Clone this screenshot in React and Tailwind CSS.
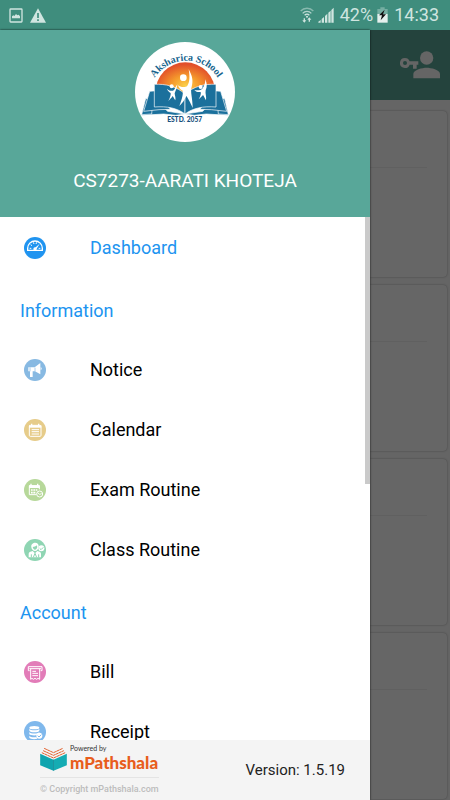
import React from 'react';

const iconClass = 'h-[22px] w-[22px] shrink-0';

const DashboardIcon = () => (
  <svg viewBox="0 0 66 66" className={iconClass} aria-hidden="true">
    <circle cx="33" cy="33" r="33" fill="#2094f0" />
    <path d="M11 40V34a22 22 0 0 1 44 0v6z" fill="none" stroke="#fff" strokeWidth="4" />
    <path d="M17 34h5M20 23l4 3M28 16l2 5M38 16l-2 5M49 34h-5" stroke="#fff" strokeWidth="3" />
    <path d="M30 35L47 20L37 37z" fill="#fff" />
    <circle cx="33" cy="36" r="5" fill="#fff" />
  </svg>
);

const NoticeIcon = () => (
  <svg viewBox="0 0 66 66" className={iconClass} aria-hidden="true">
    <circle cx="33" cy="33" r="33" fill="#87b9e2" />
    <path d="M13 25h19l17-13v34L33 37h-7v17h-8V37h-5z" fill="#fff" />
    <path d="M18 25v12M33 26v11" stroke="#87b9e2" strokeWidth="2" />
    <path d="M50 24c4 2 4 8 0 10" fill="#fff" />
  </svg>
);

const CalendarIcon = () => (
  <svg viewBox="0 0 66 66" className={iconClass} aria-hidden="true">
    <circle cx="33" cy="33" r="33" fill="#e6cc8a" />
    <rect x="16" y="19" width="35" height="33" rx="3" fill="none" stroke="#fff" strokeWidth="3" />
    <path d="M15 19h37v7H15z" fill="#fff" />
    <path d="M23 14v8M44 14v8" stroke="#fff" strokeWidth="4" />
    <path d="M23 32h22M23 38h22M23 45h22" stroke="#fff" strokeWidth="3" />
  </svg>
);

const ExamIcon = () => (
  <svg viewBox="0 0 66 66" className={iconClass} aria-hidden="true">
    <circle cx="33" cy="33" r="33" fill="#b7d89a" />
    <path d="M37 47H16V20h30v11" fill="none" stroke="#fff" strokeWidth="3" />
    <path d="M15 19h32v8H15z" fill="#fff" />
    <path d="M21 14v8M41 14v8" stroke="#fff" strokeWidth="4" />
    <path d="M21 33h19M21 41h15" stroke="#fff" strokeWidth="5" strokeDasharray="5 2" />
    <circle cx="47" cy="45" r="9" fill="#b7d89a" stroke="#fff" strokeWidth="3" />
    <path d="M41 41l6 5 6-2" fill="none" stroke="#fff" strokeWidth="3" />
  </svg>
);

const ClassIcon = () => (
  <svg viewBox="0 0 66 66" className={iconClass} aria-hidden="true">
    <circle cx="33" cy="33" r="33" fill="#8fd5b3" />
    <path d="M22 25c-3-17 24-19 22-2-1 7-5 13-11 13s-10-5-11-11z" fill="#fff" />
    <path d="M26 24c5 0 9-2 12-5l2 5c-1 5-4 8-7 8s-6-3-7-8z" fill="#8fd5b3" />
    <path d="M14 55V44c0-4 5-6 12-8l7 7 7-7c7 2 11 4 11 8v11z" fill="#fff" />
    <path d="M33 43l-5 12M33 43l5 12M22 46v9M44 46v9" stroke="#8fd5b3" strokeWidth="3" />
    <circle cx="52" cy="28" r="9" fill="#fff" />
    <path d="M47 28l4 4 7-7" fill="none" stroke="#8fd5b3" strokeWidth="3" />
  </svg>
);

const BillIcon = () => (
  <svg viewBox="0 0 66 66" className={iconClass} aria-hidden="true">
    <circle cx="33" cy="33" r="33" fill="#e27cb8" />
    <path d="M17 29h-4V17h41v12h-4" fill="none" stroke="#fff" strokeWidth="3" />
    <path d="M16 23h35" stroke="#fff" strokeWidth="3" />
    <path d="M20 23v32l4-3 4 3 5-3 5 3 4-3 5 3V23" fill="none" stroke="#fff" strokeWidth="3" />
    <path d="M25 31h11M25 37h17M25 44h17" stroke="#fff" strokeWidth="3" />
  </svg>
);

const ReceiptIcon = () => (
  <svg viewBox="0 0 66 66" className={iconClass} aria-hidden="true">
    <circle cx="33" cy="33" r="33" fill="#7fb8ec" />
    <ellipse cx="31" cy="20" rx="15" ry="5" fill="#fff" />
    <path d="M16 23c3 6 27 6 30 0v6c-3 6-27 6-30 0z" fill="#fff" />
    <path d="M16 33c3 6 25 6 30 1v3c-5 1-8 4-8 6-9 1-20 0-22-3z" fill="#fff" />
    <path d="M16 44c3 5 14 6 21 4l3 5c-9 3-22 1-24-3z" fill="#fff" />
    <circle cx="46" cy="44" r="9" fill="#fff" />
    <path d="M41 44l4 4 7-7" fill="none" stroke="#7fb8ec" strokeWidth="3" />
  </svg>
);

const sections = [
  {
    title: 'Information',
    items: [
      { label: 'Notice', icon: NoticeIcon },
      { label: 'Calendar', icon: CalendarIcon },
      { label: 'Exam Routine', icon: ExamIcon },
      { label: 'Class Routine', icon: ClassIcon },
    ],
  },
  {
    title: 'Account',
    items: [
      { label: 'Bill', icon: BillIcon },
      { label: 'Receipt', icon: ReceiptIcon },
    ],
  },
];

const StatusBar = () => (
  <div className="flex h-[30px] shrink-0 items-center justify-between bg-[#3f8d7d] pl-2 pr-[11px] text-[#d0e5e0]">
    <div className="flex items-center gap-[6px]">
      <svg viewBox="0 0 42 45" className="h-[15px] w-4" aria-hidden="true">
        <rect x="3" y="3" width="36" height="39" rx="2" fill="none" stroke="currentColor" strokeWidth="4" />
        <path d="M9 31v-6l4-3 3 2 5-6 4 4 4-2 4 5v6z" fill="currentColor" />
      </svg>
      <svg viewBox="0 0 48 45" className="h-[15px] w-4" aria-hidden="true">
        <path d="M24 1L48 44H0z" fill="currentColor" />
        <path d="M24 15v15M24 34v5" stroke="#3f8d7d" strokeWidth="5" />
      </svg>
    </div>
    <div className="flex items-center">
      <svg viewBox="0 0 42 48" className="mr-1 h-4 w-[14px]" aria-hidden="true">
        <g fill="none" stroke="currentColor" strokeWidth="4">
          <path d="M2 12c10-11 28-11 38 0" opacity="0.5" />
          <path d="M8 19c7-8 19-8 26 0" opacity="0.8" />
          <path d="M14 25c4-4 10-4 14 0" />
        </g>
        <circle cx="21" cy="29" r="3" fill="currentColor" />
        <path d="M13 34v10M28 34v10" stroke="currentColor" strokeWidth="4" />
        <path d="M7 40h12l-6 7zM22 38h12l-6-7z" fill="currentColor" />
      </svg>
      <svg viewBox="0 0 48 48" className="mr-[6px] h-4 w-4" aria-hidden="true">
        <path d="M1 47v-3l7-5v8zM11 47V36l7-6v17zM21 47V27l7-7v27zM31 47V17l7-6v36zM40 47V9l7-7v45z" fill="currentColor" />
      </svg>
      <span className="text-lg leading-6">42%</span>
      <svg viewBox="0 0 33 48" className="ml-1 h-4 w-[11px]" aria-hidden="true">
        <path d="M10 1h13v5h9v15H1V6h9z" fill="#75aea2" />
        <path d="M1 21h31v26H1z" fill="#e4f0ed" />
        <path d="M23 8L6 25h9l-4 15 16-18h-9z" fill="#111" />
      </svg>
      <span className="ml-[6px] text-lg leading-6">14:33</span>
    </div>
  </div>
);

const SchoolLogo = () => (
  <svg viewBox="30 22 300 300" className="h-[100px] w-[100px]" role="img" aria-label="Aksharica School">
    <defs>
      <radialGradient id="sun" cx="0.5" cy="0.55" r="0.5">
        <stop offset="0" stopColor="#fbd04a" />
        <stop offset="0.45" stopColor="#f59a2c" />
        <stop offset="1" stopColor="#e2502a" />
      </radialGradient>
      <path id="nameArc" d="M71 191A113 113 0 0 1 297 191" />
    </defs>
    <circle cx="180" cy="172" r="150" fill="#fff" />
    <path d="M91 175a90 92 0 0 1 180 0v35H91z" fill="url(#sun)" />
    {/* book */}
    <g fill="#1b709c" stroke="#fff" strokeWidth="2">
      <path d="M62 192l24-2 42 40 52 8-28 4-36-4-66 4z" />
      <path d="M299 192l-24-2-42 40-53 8 28 4 36-4 66 4z" />
      <path d="M62 192l-12 48 30-2 4-48z" />
      <path d="M299 192l11 48-30-2-4-48z" />
      <path d="M74 170l22-2 40 56-34 1-46 5z" />
      <path d="M287 170l-22-2-40 56 34 1 46 5z" />
      <path d="M88 149c34-2 66 6 92 29v60c-24-18-53-24-92-21z" />
      <path d="M273 149c-34-2-67 6-93 29v60c24-18 54-24 93-21z" />
    </g>
    {/* children */}
    <g fill="#fff">
      <circle cx="175" cy="129" r="10" />
      <path d="M191 104c11 20 14 34 9 52-5 15 3 32 3 64-8-18-13-28-19-36-5 12-12 21-21 30 8-22 12-36 10-46-7-3-11-9-15-17 9 7 22 9 29 2 7-10 8-27 4-49z" />
      <circle cx="140" cy="155" r="6" />
      <path d="M126 162c7 7 15 8 20 5 4-4 5-10 11-18-1 12-6 20-8 27 0 6 4 12 2 21-4-6-6-10-8-13-4 6-8 10-13 15 5-10 8-17 7-24-5-3-9-7-11-13z" />
      <circle cx="227" cy="157" r="6" />
      <path d="M241 134c5 12 6 22 1 33-2 10 3 19 1 30-4-7-6-12-9-16-5 5-8 9-13 13 4-8 8-15 6-22-8 1-13 0-19-6 9 1 18 2 24-4 6-8 9-17 9-28z" />
    </g>
    <text fill="#17648d" className="font-['Liberation_Serif',serif] text-[30px] font-bold">
      <textPath href="#nameArc" startOffset="50%" textAnchor="middle">Aksharica School</textPath>
    </text>
    <text x="179" y="263" textAnchor="middle" fill="#17507c" className="font-[Lato,sans-serif] text-[20px] font-black">
      ESTD. 2057
    </text>
  </svg>
);

const DrawerFooter = () => (
  <footer className="flex h-[60px] shrink-0 items-center justify-between bg-[#f4f4f4] pl-10 pr-[25px]">
    <div className="flex flex-col">
      <div className="flex h-[37px] items-center gap-[3px] border-b border-[#e4e4e4]">
        <svg viewBox="0 0 80 72" className="h-6 w-[27px] shrink-0" aria-hidden="true">
          <path d="M0 20l40 18v33L0 55z" fill="#0fa4ae" />
          <path d="M80 20L40 38v33l40-16z" fill="#15acb3" />
          <path d="M40 38v33" stroke="#087f8e" strokeWidth="2" />
          <path d="M5 17l35 16 35-16M9 11l31 14 31-14M12 4l28 13L68 4" fill="none" stroke="#e2602c" strokeWidth="3" strokeDasharray="9 1" />
        </svg>
        <div className="flex flex-col font-[Lato,sans-serif]">
          <span className="text-[7px] leading-[9px] text-[#333]">Powered by</span>
          <span className="text-[17px] font-black leading-5 text-[#e85d1c]">mPathshala</span>
        </div>
      </div>
      <small className="h-[22px] text-[9px] font-medium leading-[22px] text-[#bcbcbc]">© Copyright mPathshala.com</small>
    </div>
    <span className="text-[15px] leading-5 text-[#222]">Version: 1.5.19</span>
  </footer>
);

const Drawer = () => (
  <aside className="z-10 flex min-w-0 flex-1 flex-col bg-white shadow-[0_0_2px_rgba(0,0,0,0.8)]">
    <header className="flex flex-col items-center bg-[#58a799] pb-6 pt-3">
      <SchoolLogo />
      <h1 className="mt-[27px] text-[19px] leading-6 text-white">CS7273-AARATI KHOTEJA</h1>
    </header>
    <nav className="relative min-h-0 flex-1 overflow-hidden pt-px text-lg">
      <a href="#dashboard" className="flex h-[60px] items-center gap-11 pl-6 text-[#2094f0]">
        <DashboardIcon />
        Dashboard
      </a>
      {sections.map((section) => (
        <section key={section.title}>
          <h2 className="flex h-[62px] items-center pl-5 pt-1 text-[#2094f0]">{section.title}</h2>
          {section.items.map(({ label, icon: Icon }) => (
            <a key={label} href="#menu" className="flex h-[60px] items-center gap-11 pl-6 text-black">
              <Icon />
              {label}
            </a>
          ))}
        </section>
      ))}
      {/* scroll thumb */}
      <div className="absolute right-0 top-0 h-[51%] w-[5px] bg-[#cacaca]" />
    </nav>
    <DrawerFooter />
  </aside>
);

const DimmedPage = () => (
  <main className="flex w-20 shrink-0 flex-col overflow-hidden bg-[#656565]">
    <div className="flex h-[70px] shrink-0 items-center justify-end bg-[#24433d] pr-[10px]">
      <button type="button" aria-label="Account">
        <svg viewBox="0 0 120 84" className="h-7 w-10" fill="#656565" aria-hidden="true">
          <circle cx="80" cy="21" r="20" />
          <path d="M40 82V69c0-13 27-19 40-19s40 6 40 19v13z" />
          <path fillRule="evenodd" d="M15 21a15 15 0 0 1 14 10h26v10h-5v12H39V41H29a15 15 0 1 1-14-20zm0 9a6 6 0 1 0 0 12 6 6 0 0 0 0-12z" />
        </svg>
      </button>
    </div>
    <div className="flex flex-col gap-2 pr-[3px] pt-[11px]">
      {[0, 1, 2, 3].map((card) => (
        <div key={card} className="h-[166px] shrink-0 rounded-r-sm bg-[#666] pr-5 shadow-[0_0_2px_rgba(0,0,0,0.35)]">
          <div className="h-[57px] border-b border-[#606060]" />
        </div>
      ))}
    </div>
  </main>
);

const App = () => (
  <div className="flex h-screen flex-col overflow-hidden font-[Roboto,sans-serif]">
    <StatusBar />
    <div className="flex min-h-0 flex-1">
      <Drawer />
      <DimmedPage />
    </div>
  </div>
);

export default App;
